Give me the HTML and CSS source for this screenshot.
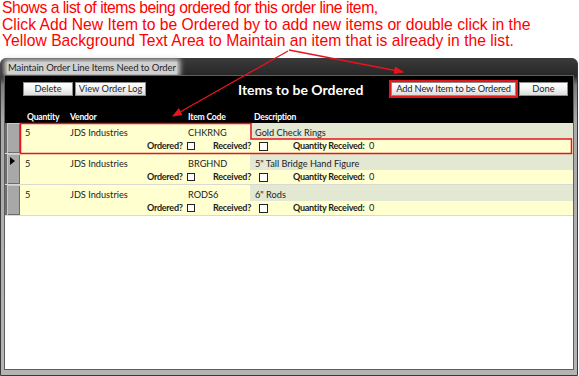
FILE: index.html
```html
<!DOCTYPE html>
<html>
<head>
<meta charset="utf-8">
<link rel="stylesheet" href="styles.css">
</head>
<body>
<div class="note">
  <p class="l1">Shows a list of items being ordered for this order line item,</p>
  <p>Click Add New Item to be Ordered by to add new items or double click in the</p>
  <p>Yellow Background Text Area to Maintain an item that is already in the list.</p>
</div>
<div class="window">
  <div class="titlebar"><span class="title">Maintain Order Line Items Need to Order</span></div>
  <div class="client">
    <div class="head">
      <div class="toolbar">
        <button class="btn btn-delete">Delete</button>
        <button class="btn btn-log">View Order Log</button>
        <h1 class="form-title">Items to be Ordered</h1>
        <span class="btn-hl"><button class="btn btn-add">Add New Item to be Ordered</button></span>
        <button class="btn btn-done">Done</button>
      </div>
      <div class="cols">
        <span class="c-qty">Quantity</span><span class="c-vendor">Vendor</span><span class="c-code">Item Code</span><span class="c-desc">Description</span>
      </div>
    </div>
    <div class="list">
      <div class="rec">
        <div class="sel"></div>
        <div class="fields">
          <div class="line1"><span class="qty">5</span><span class="vendor">JDS Industries</span><span class="code">CHKRNG</span><span class="desc">Gold Check Rings</span></div>
          <div class="line2"><b class="lbl-ord">Ordered?</b><i class="chk"></i><b class="lbl-rec">Received?</b><i class="chk chk2"></i><b class="lbl-qr">Quantity Received:</b><span class="qr">0</span></div>
        </div>
      </div>
      <div class="rec">
        <div class="sel"><span class="cur"></span></div>
        <div class="fields">
          <div class="line1"><span class="qty">5</span><span class="vendor">JDS Industries</span><span class="code">BRGHND</span><span class="desc">5" Tall Bridge Hand Figure</span></div>
          <div class="line2"><b class="lbl-ord">Ordered?</b><i class="chk"></i><b class="lbl-rec">Received?</b><i class="chk chk2"></i><b class="lbl-qr">Quantity Received:</b><span class="qr">0</span></div>
        </div>
      </div>
      <div class="rec">
        <div class="sel"></div>
        <div class="fields">
          <div class="line1"><span class="qty">5</span><span class="vendor">JDS Industries</span><span class="code">RODS6</span><span class="desc">6" Rods</span></div>
          <div class="line2"><b class="lbl-ord">Ordered?</b><i class="chk"></i><b class="lbl-rec">Received?</b><i class="chk chk2"></i><b class="lbl-qr">Quantity Received:</b><span class="qr">0</span></div>
        </div>
      </div>
    </div>
    <div class="empty"></div>
  </div>
</div>
<svg class="annot" width="579" height="376" viewBox="0 0 579 376">
  <defs>
    <marker id="ah" markerWidth="10" markerHeight="8" refX="9" refY="4" orient="auto" markerUnits="userSpaceOnUse">
      <path d="M0,0 L10,4 L0,8 z" fill="#e8141c"/>
    </marker>
  </defs>
  <line x1="288" y1="51" x2="173" y2="116" stroke="#e8141c" stroke-width="1.3" marker-end="url(#ah)"/>
  <line x1="289" y1="50" x2="403" y2="72" stroke="#e8141c" stroke-width="1.3" marker-end="url(#ah)"/>
  <path d="M20.5,123.5 H251 V139 H571.5 V153.5 H20.5 Z" fill="none" stroke="#e8141c" stroke-width="1.5"/>
</svg>
</body>
</html>
```
FILE: styles.css
```css
html, body {
  margin: 0;
  padding: 0;
}
body {
  width: 579px;
  height: 376px;
  overflow: hidden;
  background: #fff;
  position: relative;
}
.note {
  height: 58px;
  box-sizing: border-box;
  padding: 0 0 0 2px;
  color: #ff0000;
  font: 15.7px/16.7px "Liberation Sans", Arial, sans-serif;
}
.note p {
  margin: 0;
  white-space: nowrap;
}
.note .l1 {
  letter-spacing: -0.46px;
}
.window {
  width: 578px;
  height: 318px;
  box-sizing: border-box;
  border: 1px solid #3a3a3a;
  border-radius: 6px 6px 0 0;
  padding: 0 4px 6px 4px;
  background: linear-gradient(to bottom, #3a3a3a 0, #262626 17px, #7d7d7d 26px, #a9a9a9 60px, #b4b4b4 100%);
  display: flex;
  flex-direction: column;
}
.titlebar {
  height: 17px;
  display: flex;
  align-items: center;
  padding-left: 2px;
}
.title {
  font: 9.5px/12px Lato, "Open Sans", sans-serif;
  letter-spacing: -0.1px;
  white-space: nowrap;
  color: #262626;
  background: #d0d0d0;
  box-shadow: 0 0 5px 3px #cfcfcf;
  padding: 0 1px;
  margin-top: 1px;
}
.client {
  flex: 1;
  background: #fff;
  display: flex;
  flex-direction: column;
  box-shadow: 0 0 0 1px #5e5e5e;
  font-family: Lato, "Open Sans", sans-serif;
  white-space: nowrap;
}
.head {
  background: #000;
}
.toolbar {
  height: 26px;
  display: flex;
  align-items: center;
  padding: 0 5px 0 18px;
}
.btn {
  height: 14px;
  box-sizing: border-box;
  margin: 0;
  padding: 0;
  border: 1px solid #8c8c8c;
  background: linear-gradient(to bottom, #ffffff 0, #f3f3f3 50%, #dcdcdc 100%);
  font: 9.3px/12px Lato, "Open Sans", sans-serif;
  color: #1c1c1c;
  text-align: center;
  white-space: nowrap;
  overflow: hidden;
}
.btn-delete { width: 50px; }
.btn-log { width: 71px; margin-left: 2px; }
.btn-add { width: 125px; letter-spacing: -0.15px; }
.btn-done { width: 49px; margin-left: 3px; }
.form-title {
  margin: 0 0 0 92px;
  font: bold 14px/16px Lato, "Open Sans", sans-serif;
  color: #fff;
  padding-top: 2px;
}
.btn-hl {
  margin-left: auto;
  display: flex;
  outline: 2px solid #e8141c;
}
.cols {
  height: 11px;
  padding-top: 10px;
  margin-left: 15px;
  display: grid;
  grid-template-columns: 50px 118px 62px 1fr;
  font: bold 8.6px/11px Lato, "Open Sans", sans-serif;
  letter-spacing: -0.2px;
  color: #fff;
}
.c-qty { padding-left: 7px; }
.c-desc { padding-left: 4px; }
.rec {
  height: 30px;
  display: flex;
  border-bottom: 1px solid #d9d9d0;
  background: #ffffd0;
}
.sel {
  width: 13px;
  border-left: 2px solid #6d6d6d;
  background: #a8a8a8;
  box-shadow: inset 1px 1px 0 #c9c9c9, inset -1px -1px 0 #6c6c6c;
  position: relative;
}
.cur {
  position: absolute;
  left: 3px;
  top: 3px;
  width: 0;
  height: 0;
  border-left: 5px solid #000;
  border-top: 4px solid transparent;
  border-bottom: 4px solid transparent;
}
.fields {
  flex: 1;
  display: flex;
  flex-direction: column;
  font-size: 9.2px;
  color: #222;
}
.line1 {
  height: 16px;
  display: grid;
  grid-template-columns: 50px 118px 62px 1fr;
}
.line1 span {
  padding-top: 3px;
  line-height: 13px;
}
.qty { padding-left: 5px; }
.desc {
  background: #e2e8d2;
  padding-left: 5px;
}
.line2 {
  height: 14px;
  display: flex;
  align-items: center;
  padding-left: 127px;
  line-height: 12px;
}
.line2 b {
  font-weight: bold;
  font-size: 9px;
  letter-spacing: -0.25px;
  color: #1c1c1c;
}
.lbl-ord { width: 40px; }
.lbl-rec { width: 46px; }
.lbl-qr { width: 76px; }
.chk {
  width: 8px;
  height: 8px;
  box-sizing: border-box;
  border: 1px solid #222;
  background: #fff;
  margin-right: 18px;
}
.chk2 {
  width: 9px;
  height: 9px;
  margin-right: 25px;
}
.empty {
  flex: 1;
  background: #fff;
}
.annot {
  position: absolute;
  left: 0;
  top: 0;
  pointer-events: none;
}
```
